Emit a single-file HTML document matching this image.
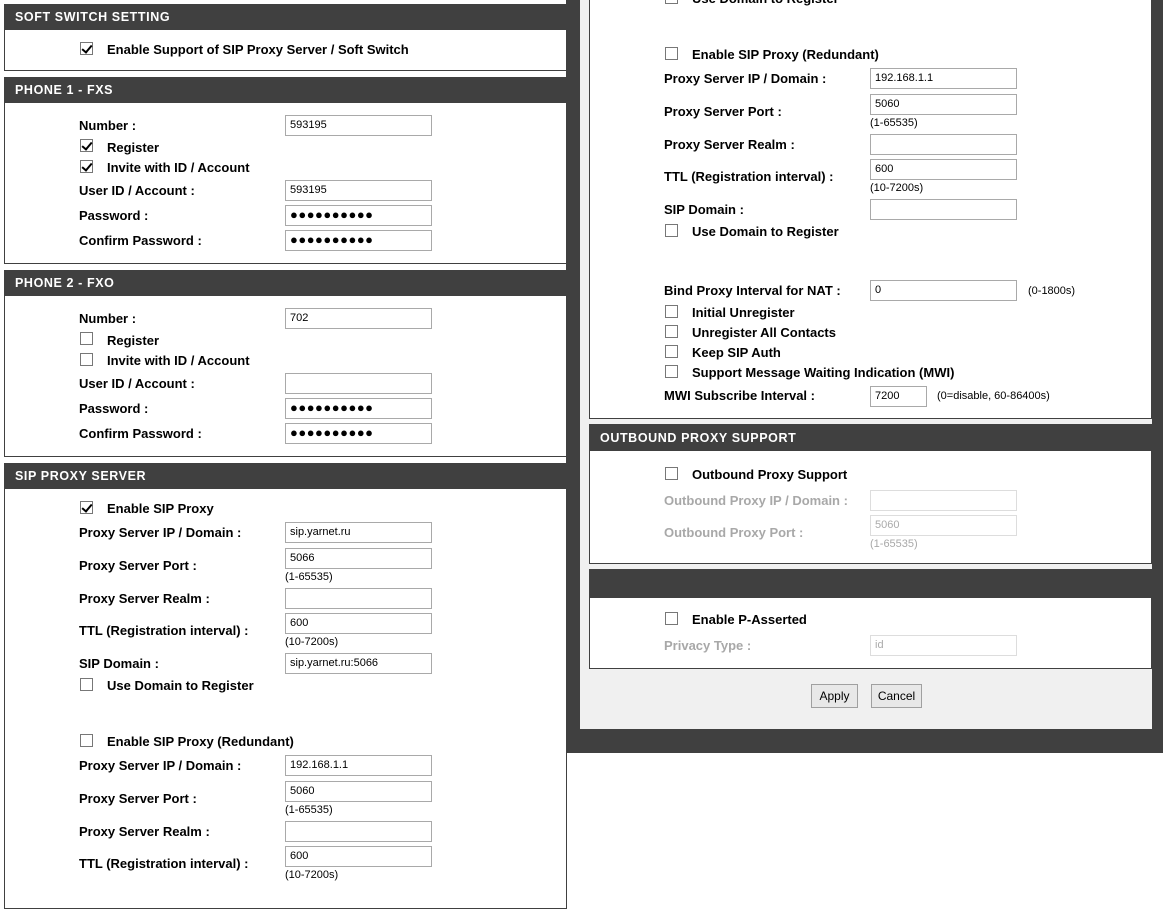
<!DOCTYPE html>
<html><head><meta charset="utf-8"><style>
*{margin:0;padding:0;box-sizing:border-box}
body{width:1163px;height:881px;position:relative;overflow:hidden;background:#fff;font-family:"Liberation Sans",Arial,sans-serif;color:#000}
.a{position:absolute}
.hd{position:absolute;background:#404040;color:#fff;font:bold 12.5px "Liberation Sans",sans-serif;letter-spacing:.6px;padding-left:11px}
.bx{position:absolute;background:#fff;border:1px solid #404040}
.l{position:absolute;font:bold 13px "Liberation Sans",sans-serif;white-space:nowrap;line-height:16px}
.g{color:#a8a8a8}
.i{position:absolute;width:147px;height:21px;border:1px solid #a9a9a9;background:#fff;font:11px "Liberation Sans",sans-serif;padding:3px 0 0 4px;white-space:nowrap}
.i.d{border-color:#ddd;color:#aaa}
.h{position:absolute;font:11px "Liberation Sans",sans-serif;white-space:nowrap}
.c{position:absolute;width:13px;height:13px;border:1px solid #777;background:#fff}
.c.k::after{content:"";position:absolute;left:3px;top:0px;width:4px;height:8px;border:solid #000;border-width:0 2px 2px 0;transform:rotate(40deg)}
.pw{font-size:13px;letter-spacing:0.5px;padding-top:1px}
.btn{position:absolute;height:24px;border:1px solid #a0a0a0;background:#e8e8e8;font:12px "Liberation Sans",sans-serif;text-align:center;line-height:22px}
</style></head><body>

<div class="a" style="left:566px;top:0;width:597px;height:729px;background:#404040"></div>
<div class="a" style="left:580px;top:0;width:572px;height:729px;background:#f0f0f0"></div>
<div class="a" style="left:566px;top:729px;width:597px;height:24px;background:#404040"></div>

<div class="hd" style="left:4px;top:4px;width:562px;height:27px;line-height:27px">SOFT SWITCH SETTING</div>
<div class="bx" style="left:4px;top:30px;width:563px;height:41px;border-top:0"></div>
<div class="c k" style="left:80px;top:42px"></div><div class="l" style="left:107px;top:42px">Enable Support of SIP Proxy Server / Soft Switch</div>

<div class="hd" style="left:4px;top:77px;width:562px;height:27px;line-height:27px">PHONE 1 - FXS</div>
<div class="bx" style="left:4px;top:103px;width:563px;height:161px;border-top:0"></div>
<div class="l" style="left:79px;top:118px">Number :</div><div class="i" style="left:285px;top:115px">593195</div>
<div class="c k" style="left:80px;top:139px"></div><div class="l" style="left:107px;top:140px">Register</div>
<div class="c k" style="left:80px;top:160px"></div><div class="l" style="left:107px;top:160px">Invite with ID / Account</div>
<div class="l" style="left:79px;top:183px">User ID / Account :</div><div class="i" style="left:285px;top:180px">593195</div>
<div class="l" style="left:79px;top:208px">Password :</div><div class="i pw" style="left:285px;top:205px">●●●●●●●●●●</div>
<div class="l" style="left:79px;top:233px">Confirm Password :</div><div class="i pw" style="left:285px;top:230px">●●●●●●●●●●</div>

<div class="hd" style="left:4px;top:270px;width:562px;height:27px;line-height:27px">PHONE 2 - FXO</div>
<div class="bx" style="left:4px;top:296px;width:563px;height:161px;border-top:0"></div>
<div class="l" style="left:79px;top:311px">Number :</div><div class="i" style="left:285px;top:308px">702</div>
<div class="c" style="left:80px;top:332px"></div><div class="l" style="left:107px;top:333px">Register</div>
<div class="c" style="left:80px;top:353px"></div><div class="l" style="left:107px;top:353px">Invite with ID / Account</div>
<div class="l" style="left:79px;top:376px">User ID / Account :</div><div class="i" style="left:285px;top:373px"></div>
<div class="l" style="left:79px;top:401px">Password :</div><div class="i pw" style="left:285px;top:398px">●●●●●●●●●●</div>
<div class="l" style="left:79px;top:426px">Confirm Password :</div><div class="i pw" style="left:285px;top:423px">●●●●●●●●●●</div>

<div class="hd" style="left:4px;top:463px;width:562px;height:27px;line-height:27px">SIP PROXY SERVER</div>
<div class="bx" style="left:4px;top:489px;width:563px;height:420px;border-top:0"></div>
<div class="c k" style="left:80px;top:501px"></div><div class="l" style="left:107px;top:501px">Enable SIP Proxy</div>
<div class="l" style="left:79px;top:525px">Proxy Server IP / Domain :</div><div class="i" style="left:285px;top:522px">sip.yarnet.ru</div>
<div class="l" style="left:79px;top:558px">Proxy Server Port :</div><div class="i" style="left:285px;top:548px">5066</div><div class="h" style="left:285px;top:571px">(1-65535)</div>
<div class="l" style="left:79px;top:591px">Proxy Server Realm :</div><div class="i" style="left:285px;top:588px"></div>
<div class="l" style="left:79px;top:623px">TTL (Registration interval) :</div><div class="i" style="left:285px;top:613px">600</div><div class="h" style="left:285px;top:636px">(10-7200s)</div>
<div class="l" style="left:79px;top:656px">SIP Domain :</div><div class="i" style="left:285px;top:653px">sip.yarnet.ru:5066</div>
<div class="c" style="left:80px;top:678px"></div><div class="l" style="left:107px;top:678px">Use Domain to Register</div>
<div class="c" style="left:80px;top:734px"></div><div class="l" style="left:107px;top:734px">Enable SIP Proxy (Redundant)</div>
<div class="l" style="left:79px;top:758px">Proxy Server IP / Domain :</div><div class="i" style="left:285px;top:755px">192.168.1.1</div>
<div class="l" style="left:79px;top:791px">Proxy Server Port :</div><div class="i" style="left:285px;top:781px">5060</div><div class="h" style="left:285px;top:804px">(1-65535)</div>
<div class="l" style="left:79px;top:824px">Proxy Server Realm :</div><div class="i" style="left:285px;top:821px"></div>
<div class="l" style="left:79px;top:856px">TTL (Registration interval) :</div><div class="i" style="left:285px;top:846px">600</div><div class="h" style="left:285px;top:869px">(10-7200s)</div>

<div class="bx" style="left:589px;top:-5px;width:563px;height:424px"></div>
<div class="c" style="left:665px;top:-9px"></div><div class="l" style="left:692px;top:-9px">Use Domain to Register</div>
<div class="c" style="left:665px;top:47px"></div><div class="l" style="left:692px;top:47px">Enable SIP Proxy (Redundant)</div>
<div class="l" style="left:664px;top:71px">Proxy Server IP / Domain :</div><div class="i" style="left:870px;top:68px">192.168.1.1</div>
<div class="l" style="left:664px;top:104px">Proxy Server Port :</div><div class="i" style="left:870px;top:94px">5060</div><div class="h" style="left:870px;top:117px">(1-65535)</div>
<div class="l" style="left:664px;top:137px">Proxy Server Realm :</div><div class="i" style="left:870px;top:134px"></div>
<div class="l" style="left:664px;top:169px">TTL (Registration interval) :</div><div class="i" style="left:870px;top:159px">600</div><div class="h" style="left:870px;top:182px">(10-7200s)</div>
<div class="l" style="left:664px;top:202px">SIP Domain :</div><div class="i" style="left:870px;top:199px"></div>
<div class="c" style="left:665px;top:224px"></div><div class="l" style="left:692px;top:224px">Use Domain to Register</div>
<div class="l" style="left:664px;top:283px">Bind Proxy Interval for NAT :</div><div class="i" style="left:870px;top:280px">0</div><div class="h" style="left:1028px;top:285px">(0-1800s)</div>
<div class="c" style="left:665px;top:305px"></div><div class="l" style="left:692px;top:305px">Initial Unregister</div>
<div class="c" style="left:665px;top:325px"></div><div class="l" style="left:692px;top:325px">Unregister All Contacts</div>
<div class="c" style="left:665px;top:345px"></div><div class="l" style="left:692px;top:345px">Keep SIP Auth</div>
<div class="c" style="left:665px;top:365px"></div><div class="l" style="left:692px;top:365px">Support Message Waiting Indication (MWI)</div>
<div class="l" style="left:664px;top:388px">MWI Subscribe Interval :</div><div class="i" style="left:870px;top:386px;width:57px">7200</div><div class="h" style="left:937px;top:390px">(0=disable, 60-86400s)</div>

<div class="hd" style="left:589px;top:424px;width:563px;height:28px;line-height:28px">OUTBOUND PROXY SUPPORT</div>
<div class="bx" style="left:589px;top:451px;width:563px;height:113px;border-top:0"></div>
<div class="c" style="left:665px;top:467px"></div><div class="l" style="left:692px;top:467px">Outbound Proxy Support</div>
<div class="l g" style="left:664px;top:493px">Outbound Proxy IP / Domain :</div><div class="i d" style="left:870px;top:490px"></div>
<div class="l g" style="left:664px;top:525px">Outbound Proxy Port :</div><div class="i d" style="left:870px;top:515px">5060</div><div class="h g" style="left:870px;top:538px">(1-65535)</div>

<div class="hd" style="left:589px;top:569px;width:563px;height:30px"></div>
<div class="bx" style="left:589px;top:598px;width:563px;height:71px;border-top:0"></div>
<div class="c" style="left:665px;top:612px"></div><div class="l" style="left:692px;top:612px">Enable P-Asserted</div>
<div class="l g" style="left:664px;top:638px">Privacy Type :</div><div class="i d" style="left:870px;top:635px">id</div>

<div class="btn" style="left:811px;top:684px;width:47px">Apply</div>
<div class="btn" style="left:871px;top:684px;width:51px">Cancel</div>
</body></html>
